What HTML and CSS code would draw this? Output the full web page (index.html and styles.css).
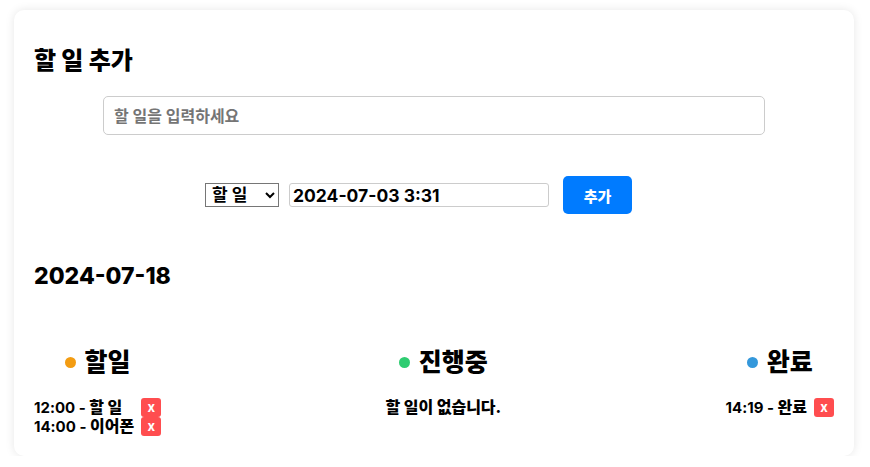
FILE: index.html
```html
<!DOCTYPE html>
<html lang="ko">
<head>
<meta charset="utf-8">
<link rel="stylesheet" href="styles.css">
</head>
<body>
<div class="card">
  <h2 class="title">할 일 추가</h2>
  <input class="task-input" type="text" placeholder="할 일을 입력하세요">
  <div class="controls">
    <select class="status-select">
      <option>할 일</option>
      <option>진행중</option>
      <option>완료</option>
    </select>
    <input class="date-input" type="text" value="2024-07-03 3:31">
    <button class="add-btn">추가</button>
  </div>
  <h2 class="date-title">2024-07-18</h2>
  <div class="board">
    <div class="col">
      <h3 class="col-title"><span class="dot dot-todo"></span>할일</h3>
      <div class="item"><span>12:00 - <span class="ko">할 일</span></span><span class="del">x</span></div>
      <div class="item"><span>14:00 - <span class="ko">이어폰</span></span><span class="del">x</span></div>
    </div>
    <div class="col">
      <h3 class="col-title"><span class="dot dot-doing"></span>진행중</h3>
      <div class="empty">할 일이 없습니다.</div>
    </div>
    <div class="col">
      <h3 class="col-title"><span class="dot dot-done"></span>완료</h3>
      <div class="item"><span>14:19 - <span class="ko">완료</span></span><span class="del">x</span></div>
    </div>
  </div>
</div>
</body>
</html>
```
FILE: styles.css
```css
* { box-sizing: border-box; }
body {
  margin: 0;
  background: #fff;
  font-family: Inter, "Noto Sans CJK KR", sans-serif;
  color: #000;
}
.card {
  width: 840px;
  margin: 10px 16px 0 14px;
  padding: 20px;
  background: #fff;
  border-radius: 10px;
  box-shadow: 0 0 10px rgba(0,0,0,0.1);
}
.title {
  margin: 16px 0 20px;
  font-size: 24px;
  line-height: 30px;
  font-weight: 800;
}
.task-input {
  display: block;
  width: 662px;
  height: 39px;
  margin: 0 auto;
  padding: 0 10px;
  border: 1px solid #ccc;
  border-radius: 5px;
  font-family: inherit;
  font-size: 16px;
  font-weight: 700;
  outline: none;
}
.task-input::placeholder { color: #757575; }
.controls {
  display: flex;
  align-items: center;
  justify-content: center;
  margin-top: 41px;
  padding-right: 31px;
  height: 38px;
}
.status-select {
  width: 74px;
  height: 24px;
  margin-right: 10px;
  font-family: inherit;
  font-size: 17px;
  font-weight: 700;
  border: 1px solid #767676;
  border-radius: 0;
  background: #fff;
  color: #000;
  padding: 0 0 0 2px;
}
.date-input {
  width: 260px;
  height: 24px;
  margin-right: 14px;
  padding: 0 3px;
  border: 1px solid #ccc;
  border-radius: 3px;
  font-family: inherit;
  font-size: 17.5px;
  font-weight: 700;
  color: #000;
  outline: none;
}
.add-btn {
  width: 69px;
  height: 38px;
  border: none;
  border-radius: 5px;
  background: #007bff;
  color: #fff;
  font-family: inherit;
  font-size: 15px;
  font-weight: 800;
}
.date-title {
  margin: 46px 0 0;
  font-size: 23px;
  line-height: 32px;
  font-weight: 800;
}
.board {
  display: flex;
  justify-content: space-between;
  margin-top: 55px;
}
.col {
  display: flex;
  flex-direction: column;
  align-items: center;
}
.col-title {
  display: flex;
  align-items: center;
  margin: 0 0 21px;
  font-size: 25px;
  line-height: 30px;
  font-weight: 800;
}
.dot {
  width: 11px;
  height: 11px;
  border-radius: 50%;
  margin-right: 9px;
}
.dot-todo { background: #f39c12; }
.dot-doing { background: #2ecc71; }
.dot-done { background: #3498db; }
.item {
  align-self: stretch;
  display: flex;
  justify-content: space-between;
  align-items: center;
  gap: 7px;
  height: 19px;
  font-size: 15px;
  font-weight: 700;
  line-height: 19px;
}
.ko { font-size: 16px; font-weight: 800; }
.del {
  display: inline-flex;
  align-items: center;
  justify-content: center;
  width: 20px;
  height: 19px;
  background: #ff4d4f;
  color: #fff;
  border-radius: 3px;
  font-size: 13px;
  font-weight: 700;
}
.empty {
  font-size: 16px;
  font-weight: 800;
  line-height: 19px;
}
```
